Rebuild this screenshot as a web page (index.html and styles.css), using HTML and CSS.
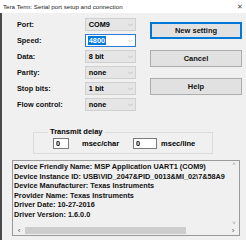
FILE: index.html
```html
<!DOCTYPE html>
<html>
    <head>
        <title>Tera Term: Serial port setup and connection</title>
        <link rel="stylesheet" href="styles.css">
    </head>
    <body>
    <div id="window">
        <div class="titlebar">
            <span>Tera Term: Serial port setup and connection</span>
            <span class="close">&#x2715;</span>
        </div>
        <div class="client">
            <div class="top">
                <div class="fields">
                    <div class="row"><label>Port:</label><div class="combo"><span>COM9</span><i>&#x2335;</i></div></div>
                    <div class="row"><label>Speed:</label><div class="combo edit"><span class="sel">4800</span><i>&#x2335;</i></div></div>
                    <div class="row"><label>Data:</label><div class="combo"><span>8 bit</span><i>&#x2335;</i></div></div>
                    <div class="row"><label>Parity:</label><div class="combo"><span>none</span><i>&#x2335;</i></div></div>
                    <div class="row"><label>Stop bits:</label><div class="combo"><span>1 bit</span><i>&#x2335;</i></div></div>
                    <div class="row"><label>Flow control:</label><div class="combo"><span>none</span><i>&#x2335;</i></div></div>
                </div>
                <div class="buttons">
                    <button class="default">New setting</button>
                    <button>Cancel</button>
                    <button>Help</button>
                </div>
            </div>
            <div class="delay">
                <div class="legend">Transmit delay</div>
                <div class="delayrow">
                    <input class="num" value="0" readonly>
                    <span class="unit">msec/char</span>
                    <input class="num wide" value="0" readonly>
                    <span class="unit">msec/line</span>
                </div>
            </div>
            <div class="info">
                <div class="text">
                    <div>Device Friendly Name: MSP Application UART1 (COM9)</div>
                    <div>Device Instance ID: USB\VID_2047&amp;PID_0013&amp;MI_02\7&amp;58A9</div>
                    <div>Device Manufacturer: Texas Instruments</div>
                    <div>Provider Name: Texas Instruments</div>
                    <div>Driver Date: 10-27-2016</div>
                    <div>Driver Version: 1.6.0.0</div>
                </div>
                <div class="vscroll"><span>&#x02C4;</span><span>&#x02C5;</span></div>
                <div class="hscroll"><span class="arrow">&lsaquo;</span><div class="track"><div class="thumb"></div></div><span class="arrow">&rsaquo;</span></div>
            </div>
        </div>
    </div>
    </body>
</html>
```
FILE: styles.css
```css
body{
    margin: 0;
    font-family: "Liberation Sans", Arial, sans-serif;
    background: #ffffff;
}
#window{
    width: 246px;
    height: 240px;
    overflow: hidden;
}
.titlebar{
    height: 13px;
    background: #ffffff;
    font-size: 6.2px;
    color: #222;
    display: flex;
    justify-content: space-between;
    align-items: center;
    padding: 0 3px 0 3px;
}
.close{
    font-size: 7px;
    color: #444;
}
.client{
    background: #f0f0f0;
    border-left: 2px solid #4a4a4a;
    height: 227px;
    padding: 5px 5px 0 10px;
    box-sizing: border-box;
}
.top{
    display: flex;
}
.fields{
    display: flex;
    flex-direction: column;
    gap: 3px;
    width: 124px;
}
.row{
    display: flex;
    align-items: center;
    height: 13px;
}
.row label{
    width: 69px;
    padding-left: 5px;
    font-size: 7.3px;
    font-weight: bold;
    color: #111;
}
.combo{
    width: 52px;
    height: 13px;
    box-sizing: border-box;
    background: #e5e5e5;
    border: 1px solid #d0d0d0;
    display: flex;
    justify-content: space-between;
    align-items: center;
    font-size: 7.3px;
    font-weight: bold;
    padding: 0 2px 0 3px;
}
.combo i{
    font-style: normal;
    font-weight: normal;
    color: #888;
    font-size: 6px;
}
.combo.edit{
    background: #fff;
    border-color: #2c7bd6;
    padding-left: 2px;
}
.sel{
    background: #0078d7;
    color: #fff;
    padding: 0 1px;
}
.buttons{
    display: flex;
    flex-direction: column;
    gap: 11px;
    margin-left: 14px;
    margin-top: 4px;
}
button{
    width: 92px;
    height: 17px;
    background: #e1e1e1;
    border: 1px solid #adadad;
    font-family: "Liberation Sans", Arial, sans-serif;
    font-size: 7.5px;
    font-weight: bold;
    color: #111;
    padding: 0;
}
button.default{
    border: 2px solid #0078d7;
}
.delay{
    margin: 21px 0 0 21px;
    width: 178px;
    height: 20px;
    border: 1px solid #dcdcdc;
    position: relative;
}
.legend{
    position: absolute;
    top: -6px;
    left: 14px;
    background: #f0f0f0;
    padding: 0 2px;
    font-size: 7.5px;
    font-weight: bold;
}
.delayrow{
    display: flex;
    align-items: center;
    padding: 5px 0 0 19px;
}
.num{
    width: 16px;
    height: 11px;
    box-sizing: border-box;
    border: 1px solid #7a7a7a;
    font-family: "Liberation Sans", Arial, sans-serif;
    font-size: 7.3px;
    font-weight: bold;
    padding: 0 2px;
}
.num.wide{
    width: 24px;
}
.unit{
    font-size: 7.5px;
    font-weight: bold;
    margin: 0 14px 0 13px;
}
.unit:last-child{
    margin-left: 4px;
}
.info{
    margin: 6px 0 0 0;
    width: 228px;
    height: 76px;
    box-sizing: border-box;
    border: 1px solid #9a9a9a;
    background: #f0f0f0;
    position: relative;
    overflow: hidden;
}
.text{
    padding: 1px 0 0 1px;
    font-size: 7.3px;
    font-weight: bold;
    line-height: 9.5px;
    white-space: nowrap;
    color: #111;
}
.vscroll{
    position: absolute;
    right: 0;
    top: 0;
    width: 10px;
    bottom: 9px;
    background: #f0f0f0;
    display: flex;
    flex-direction: column;
    justify-content: space-between;
    align-items: center;
    font-size: 6px;
    color: #999;
}
.hscroll{
    position: absolute;
    left: 0;
    right: 0;
    bottom: 0;
    height: 9px;
    background: #f0f0f0;
    display: flex;
    align-items: center;
    font-size: 8px;
    color: #555;
}
.arrow{
    width: 12px;
    text-align: center;
}
.track{
    flex: 1;
    height: 7px;
}
.thumb{
    width: 161px;
    height: 7px;
    background: #cdcdcd;
}
```
